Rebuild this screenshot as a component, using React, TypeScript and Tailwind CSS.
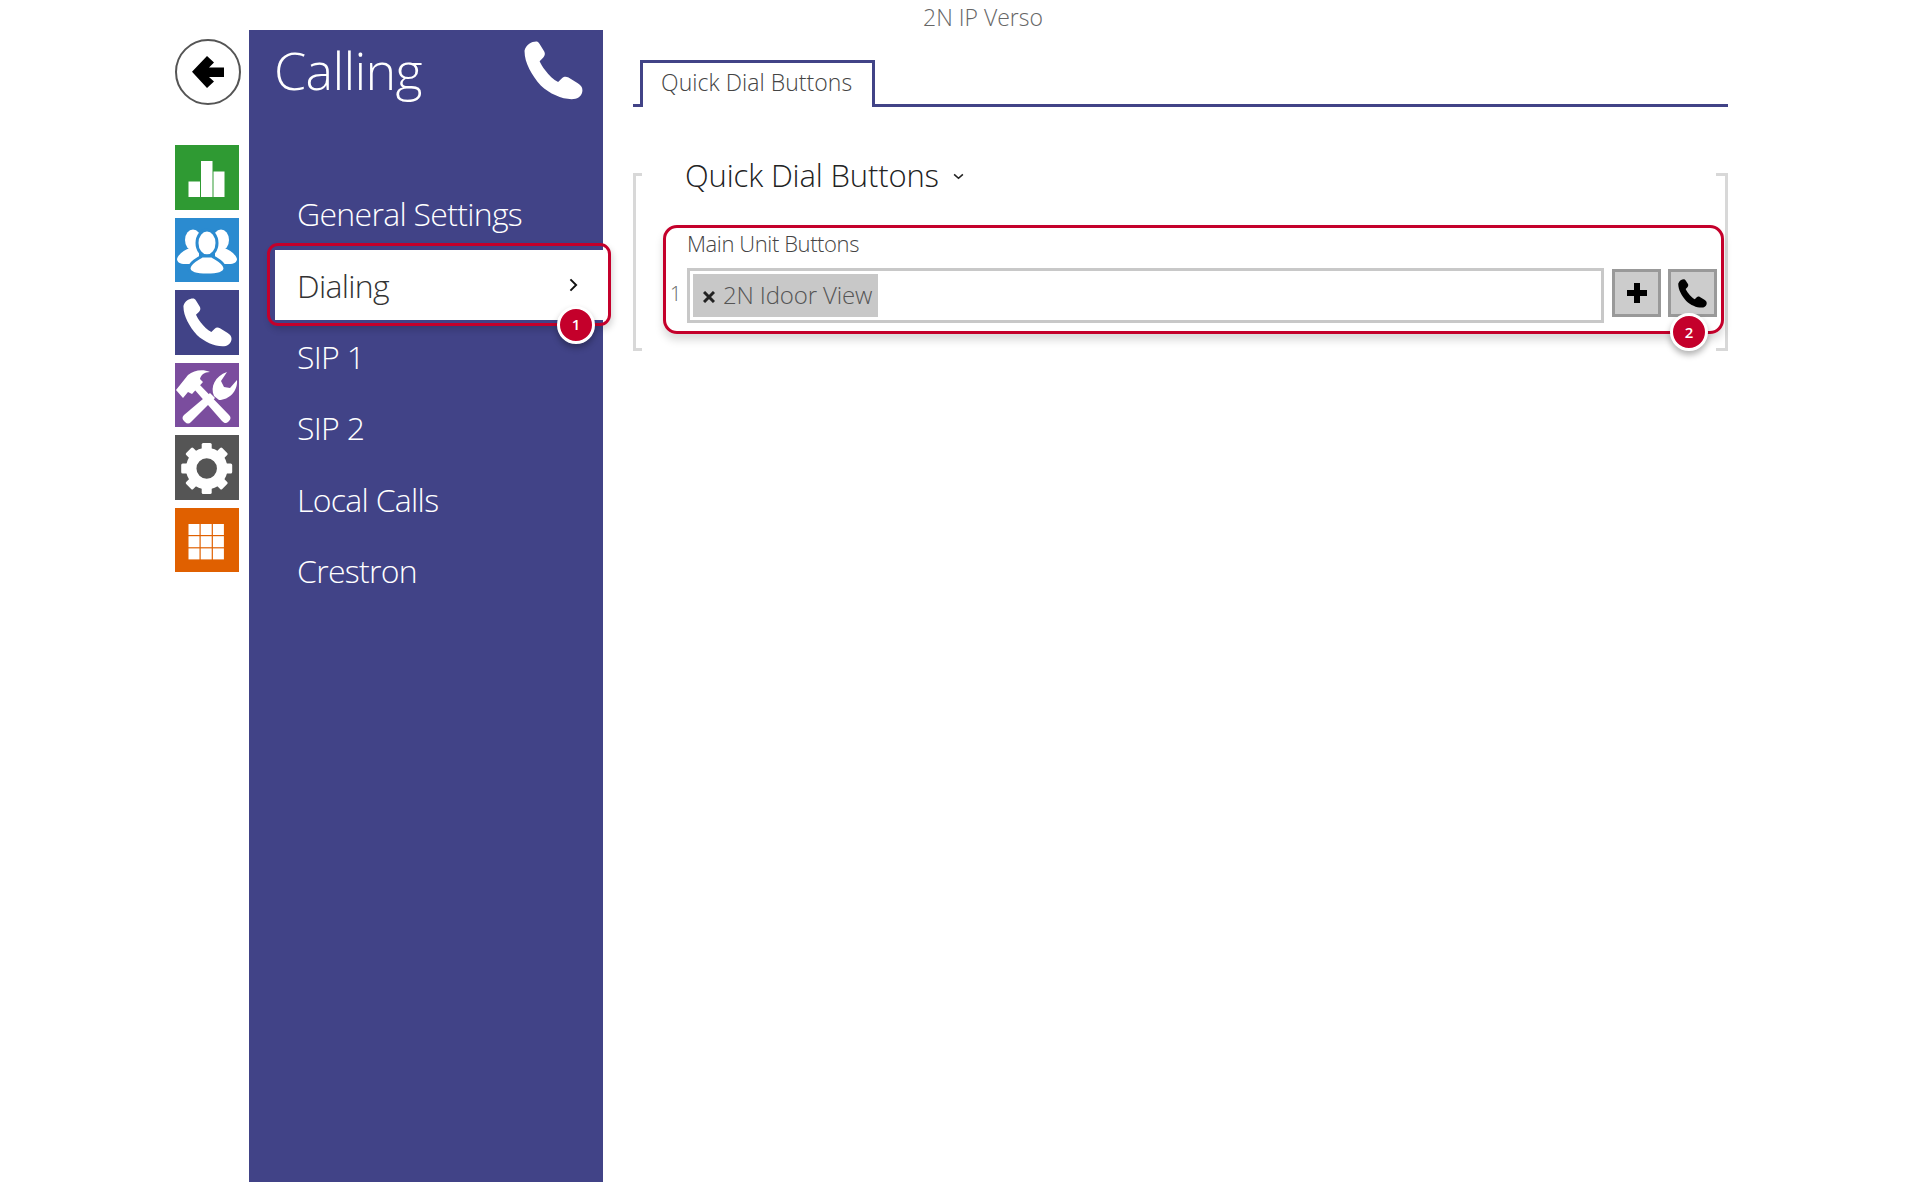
const PHONE =
  "M20 0C12 0 3 5 0 15C-1 35 12 58 28 76C45 92 70 102 88 99C96 97 100 90 100 84C100 78 97 76 92 72L76 62C72 60 68 60 65 63L58 70C50 66 42 58 36 50C31 44 28 38 26 34L32 28C35 25 36 21 34 17L26 4C24 1 22 0 20 0Z"

function PhoneIcon({ className }: { className: string }) {
  return (
    <svg viewBox="-1 -1 102 102" className={className}>
      <path d={PHONE} fill="currentColor" />
    </svg>
  )
}

function BarsIcon() {
  return (
    <svg viewBox="0 0 64 65" className="h-full w-full" fill="#fff">
      <rect x="13.5" y="36.5" width="11.5" height="15.5" />
      <rect x="26" y="16" width="11.5" height="36" />
      <rect x="38.5" y="26.5" width="11" height="25.5" />
    </svg>
  )
}

function PeopleIcon() {
  return (
    <svg viewBox="0 0 64 64" className="h-full w-full">
      <g fill="#fff">
        <ellipse cx="18" cy="22" rx="8" ry="10.5" />
        <path d="M2 41C4 35 10 32 15 30L24 30L24 46L10 46C5 46 2 44 2 41Z" />
        <ellipse cx="46" cy="22" rx="8" ry="10.5" />
        <path d="M62 41C60 35 54 32 49 30L40 30L40 46L54 46C59 46 62 44 62 41Z" />
      </g>
      <g fill="#fff" stroke="#2b8bd0" strokeWidth="3">
        <ellipse cx="32" cy="25" rx="10" ry="13" />
        <path d="M14 50C15 44 23 41 27 38L37 38C41 41 49 44 50 50C50 55 44 57 32 57C20 57 14 55 14 50Z" />
      </g>
    </svg>
  )
}

function ToolsIcon() {
  return (
    <svg viewBox="0 0 64 64" className="h-full w-full" fill="#fff">
      <path d="M19 26L24 21L54 52C56 54 56 56 54 58L53 59C51 61 49 60 47 58Z" />
      <path d="M1 27L13 12C19 7 28 6 35 9C29 9 26 12 25 16L28 19L17 31L13 29L8 35Z" />
      <path d="M35 30L40 35L16 59C14 61 12 61 10 59L9 58C7 56 7 54 9 52Z" />
      <path d="M39 33C35 24 40 13 52 9L46 18L49 24L55 25L62 17C63 28 54 37 44 37Z" />
    </svg>
  )
}

function GearIcon() {
  const teeth = [0, 45, 90, 135, 180, 225, 270, 315]
  return (
    <svg viewBox="0 0 64 65" className="h-full w-full">
      {teeth.map((a) => (
        <rect
          key={a}
          x="26.7"
          y="8"
          width="10"
          height="9"
          rx="1.5"
          fill="#fff"
          transform={`rotate(${a} 31.7 33.5)`}
        />
      ))}
      <circle cx="31.7" cy="33.5" r="15.5" fill="none" stroke="#fff" strokeWidth="10.5" />
    </svg>
  )
}

function GridIcon() {
  const cells = [13.5, 25.7, 37.9]
  return (
    <svg viewBox="0 0 64 64" className="h-full w-full" fill="#fff">
      {cells.map((y) =>
        cells.map((x) => <rect key={`${x}-${y}`} x={x} y={y + 2.5} width="11" height="11" />),
      )}
    </svg>
  )
}

function Badge({ n, className }: { n: number; className: string }) {
  return (
    <div
      className={`absolute flex h-[38px] w-[38px] items-center justify-center rounded-full border-[3px] border-white bg-[#c4002b] text-[15px] font-semibold text-white shadow-[0_4px_6px_rgba(0,0,0,0.3)] ${className}`}
    >
      {n}
    </div>
  )
}

const menu = ["General Settings", "Dialing", "SIP 1", "SIP 2", "Local Calls", "Crestron"]

export default function App() {
  return (
    <div className="flex h-[1200px] w-[1920px] overflow-hidden bg-white pl-[175px] font-['Open_Sans',sans-serif] font-light">
      <aside className="flex w-[74px] shrink-0 flex-col">
        <div className="mt-[39px] flex h-[66px] w-[66px] items-center justify-center rounded-full border-[2px] border-[#555]">
          <svg viewBox="0 0 32 32" className="h-[32px] w-[32px]">
            <path d="M0 15.7L15 0L22 6.5L17 11.5H32V21H17L22 25.5L15 32Z" fill="#000" />
          </svg>
        </div>
        <div className="mt-[40px] flex flex-col gap-[8px]">
          <div className="h-[65px] w-[64px] bg-[#2f9a33]">
            <BarsIcon />
          </div>
          <div className="h-[64px] w-[64px] bg-[#2b8bd0]">
            <PeopleIcon />
          </div>
          <div className="flex h-[65px] w-[64px] items-center justify-center bg-[#414387] text-white">
            <PhoneIcon className="h-[49px] w-[49px]" />
          </div>
          <div className="h-[64px] w-[64px] bg-[#7b4d9e]">
            <ToolsIcon />
          </div>
          <div className="h-[65px] w-[64px] bg-[#555555]">
            <GearIcon />
          </div>
          <div className="h-[64px] w-[64px] bg-[#e06000]">
            <GridIcon />
          </div>
        </div>
      </aside>

      <nav className="mt-[30px] h-[1152px] w-[354px] shrink-0 bg-[#414387] text-white">
        <div className="flex h-[148px] items-start justify-between pl-[25px] pr-[20px]">
          <h1 className="mt-[5px] text-[52px] leading-[70px] tracking-[-0.7px]">Calling</h1>
          <PhoneIcon className="mt-[11px] h-[59px] w-[59px]" />
        </div>
        <ul>
          {menu.map((m) =>
            m === "Dialing" ? (
              <li
                key={m}
                className="relative -mr-[5px] mb-[1.5px] ml-[26px] flex h-[70px] items-center justify-between bg-white pl-[22px] pr-[30px] text-[#333]"
              >
                <span className="mt-[2px] text-[32px] tracking-[-0.7px]">{m}</span>
                <svg viewBox="0 0 10 16" className="h-[14px] w-[9px]" fill="none" stroke="#111" strokeWidth="2.2">
                  <path d="M1.5 1.5L8 8L1.5 14.5" />
                </svg>
                <div className="absolute -bottom-[6px] -left-[8px] -right-[3px] -top-[7px] rounded-[11px] border-[3px] border-[#c4002b] shadow-[2px_4px_6px_rgba(0,0,0,0.15)]" />
                <Badge n={1} className="left-[282px] top-[56px]" />
              </li>
            ) : (
              <li key={m} className="flex h-[71.5px] items-center pl-[48px] text-[32px] tracking-[-0.7px]">
                {m}
              </li>
            ),
          )}
        </ul>
      </nav>

      <main className="min-w-0 flex-1">
        <p className="pl-[320px] pt-[2px] text-[23px] leading-[30px] text-[#666]">2N IP Verso</p>
        <div className="ml-[30px] mt-[28px] flex h-[47px] w-[1095px] items-stretch">
          <div className="w-[7px] border-b-[3px] border-[#414387]" />
          <div className="flex w-[235px] border-x-[3px] border-t-[3px] border-[#414387] pl-[18px] pt-[2px] text-[23px] leading-[34px] tracking-[0.05px] text-[#444]">
            Quick Dial Buttons
          </div>
          <div className="flex-1 border-b-[3px] border-[#414387]" />
        </div>

        <section className="ml-[30px] mt-[66px] flex h-[178px] w-[1095px]">
          <div className="w-[9px] shrink-0 border-y-[3px] border-l-[3px] border-[#d8d8d8]" />
          <div className="min-w-0 flex-1 pl-[43px] pr-[2px]">
            <div className="flex h-[52px] items-start">
              <h2 className="-mt-[2px] text-[31px] leading-[8px] tracking-[-0.15px] text-[#222]">Quick Dial Buttons</h2>
              <svg viewBox="0 0 12 8" className="ml-[14px] h-[7px] w-[11px]" fill="none" stroke="#222" strokeWidth="1.8">
                <path d="M1 1.5L6 6L11 1.5" />
              </svg>
            </div>
            <div className="relative -ml-[22px] h-[109px] w-[1061px]">
              <div className="absolute inset-0 rounded-[14px] border-[3px] border-[#c4002b] shadow-[0_6px_8px_rgba(0,0,0,0.15)]" />
              <Badge n={2} className="left-[1007px] top-[88px]" />
              <p className="pl-[24px] pt-[3px] text-[22px] leading-[30px] tracking-[-0.4px] text-[#444]">
                Main Unit Buttons
              </p>
              <div className="mt-[10px] flex items-start pl-[7px]">
                <span className="mt-[11px] w-[17px] text-[20px] leading-[30px] text-[#666]">1</span>
                <div className="flex h-[55px] w-[917px] items-center border-[3px] border-[#c8c8c8] bg-white pl-[3px]">
                  <div className="flex h-[43px] w-[185px] items-center bg-[#c8c8c8] pb-[2px] pl-[10px] text-[24px] tracking-[-0.15px] text-[#555]">
                    <svg viewBox="0 0 12 12" className="mr-[8px] mt-[5px] h-[12px] w-[12px]" stroke="#222" strokeWidth="3">
                      <path d="M1 1L11 11M11 1L1 11" />
                    </svg>
                    2N Idoor View
                  </div>
                </div>
                <button className="ml-[8px] mt-[1px] flex h-[48px] w-[49px] items-center justify-center border-[3px] border-[#999] bg-[#ccc]">
                  <svg viewBox="0 0 20 20" className="h-[20px] w-[20px]" fill="#000">
                    <path d="M7 0H13V7H20V13H13V20H7V13H0V7H7Z" />
                  </svg>
                </button>
                <button className="ml-[7px] mt-[1px] flex h-[48px] w-[49px] items-center justify-center border-[3px] border-[#999] bg-[#ccc] text-black">
                  <PhoneIcon className="h-[29px] w-[29px]" />
                </button>
              </div>
            </div>
          </div>
          <div className="w-[12px] shrink-0 border-y-[3px] border-r-[3px] border-[#d8d8d8]" />
        </section>
      </main>
    </div>
  )
}
